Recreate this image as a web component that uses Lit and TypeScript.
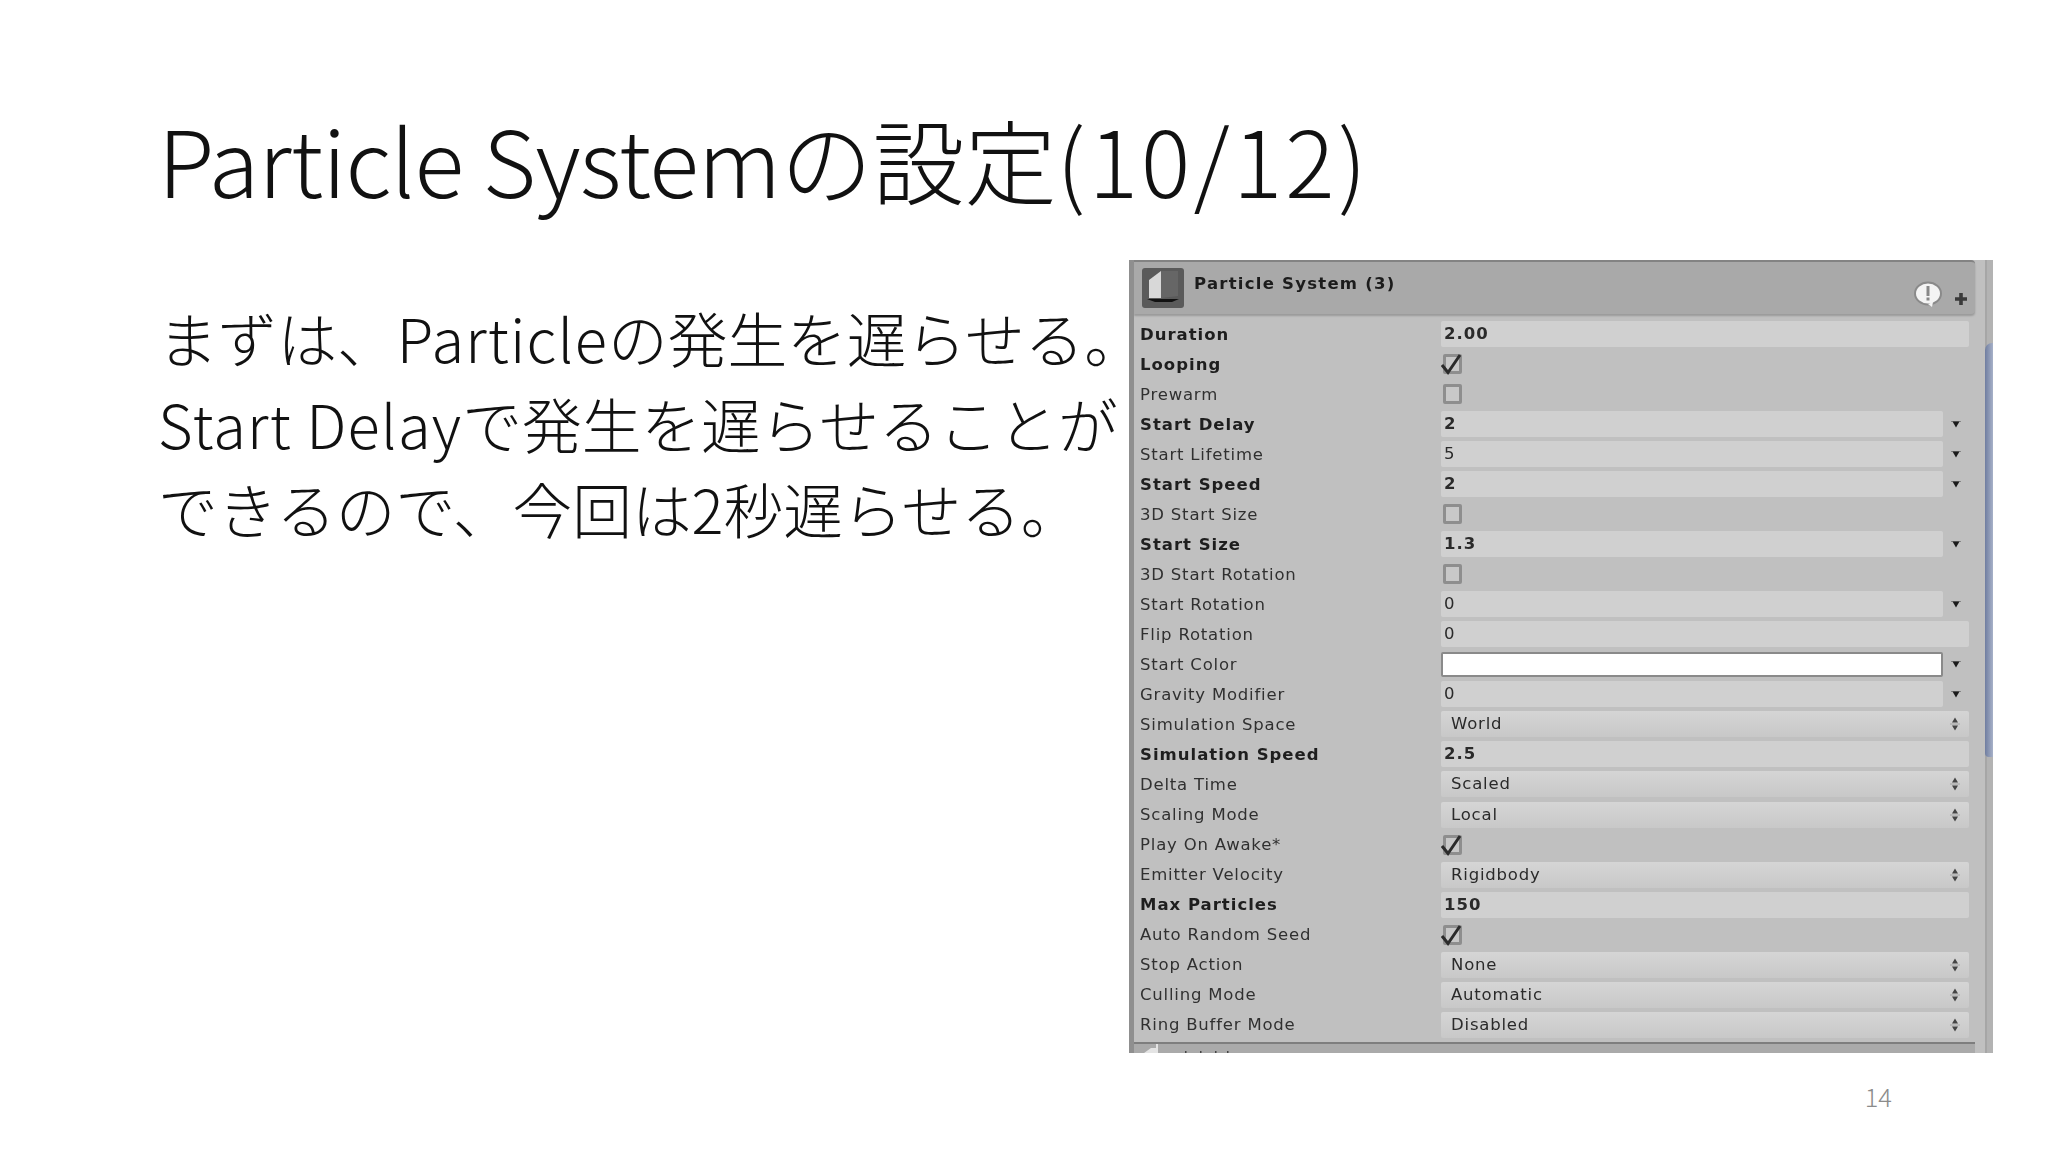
import { LitElement, html, css, svg } from "lit";
import { customElement } from "lit/decorators.js";

type Row = { l: string; b?: boolean; k: "num" | "drop" | "check" | "uncheck" | "wide" | "color" | "select"; v?: string };

const rows: Row[] = [
  { l: "Duration", b: true, k: "wide", v: "2.00" },
  { l: "Looping", b: true, k: "check" },
  { l: "Prewarm", k: "uncheck" },
  { l: "Start Delay", b: true, k: "drop", v: "2" },
  { l: "Start Lifetime", k: "drop", v: "5" },
  { l: "Start Speed", b: true, k: "drop", v: "2" },
  { l: "3D Start Size", k: "uncheck" },
  { l: "Start Size", b: true, k: "drop", v: "1.3" },
  { l: "3D Start Rotation", k: "uncheck" },
  { l: "Start Rotation", k: "drop", v: "0" },
  { l: "Flip Rotation", k: "wide", v: "0" },
  { l: "Start Color", k: "color" },
  { l: "Gravity Modifier", k: "drop", v: "0" },
  { l: "Simulation Space", k: "select", v: "World" },
  { l: "Simulation Speed", b: true, k: "wide", v: "2.5" },
  { l: "Delta Time", k: "select", v: "Scaled" },
  { l: "Scaling Mode", k: "select", v: "Local" },
  { l: "Play On Awake*", k: "check" },
  { l: "Emitter Velocity", k: "select", v: "Rigidbody" },
  { l: "Max Particles", b: true, k: "wide", v: "150" },
  { l: "Auto Random Seed", k: "check" },
  { l: "Stop Action", k: "select", v: "None" },
  { l: "Culling Mode", k: "select", v: "Automatic" },
  { l: "Ring Buffer Mode", k: "select", v: "Disabled" },
];

const arrow = svg`<svg class="arrow" width="10" height="10" viewBox="0 0 10 10"><path d="M0 2.500h10" stroke="#777" stroke-width=".8"/><path d="M1.500 2.500h7L5 8.500z" fill="#1c1c1c"/></svg>`;
const updown = svg`<svg class="arrow" width="10" height="16" viewBox="0 0 10 16"><path d="M5 1.500 8 6.500H2zM5 14.500 2 9.500h6z" fill="#444"/><path d="M0 8h10" stroke="#999" stroke-width=".8"/></svg>`;
const tick = svg`<svg class="tick" width="24" height="26" viewBox="0 0 24 26"><path d="M1 15 7 22.500 19 5" fill="none" stroke="#2b2b2b" stroke-width="3"/></svg>`;

@customElement("app-root")
export class AppRoot extends LitElement {
  static styles = css`
    :host { display: block; width: 2048px; height: 1152px; background: #fff; overflow: hidden;
      font-family: "Noto Sans CJK JP", "Noto Sans", sans-serif; }
    .slide { display: grid; grid-template-columns: 971px 864px; grid-template-rows: 260px 793px 1fr; width: 2048px; height: 1152px; padding-left: 158px; box-sizing: border-box; }
    .title { grid-column: 1 / 3; margin: 0; padding-top: 97px; font-weight: 300; font-size: 92px; line-height: 122px; color: #111; white-space: nowrap; }
    .tl { letter-spacing: -.7px; }
    .tn { letter-spacing: 3.200px; }
    .body { margin: 0; padding-top: 35px; font-weight: 300; font-size: 59.700px; line-height: 85.500px; color: #111; white-space: nowrap; }
    .bl { letter-spacing: 1.200px; }
    .panel { display: flex; flex-direction: column; background: #c0c0c0; border-left: 5px solid #8f8f8f; box-sizing: border-box; position: relative; overflow: hidden; filter: blur(.45px);
      font-family: "DejaVu Sans", sans-serif; font-size: 16.500px; color: #2c2c2c; letter-spacing: .8px; }
    .head { display: flex; align-items: flex-start; height: 54px; flex: none; margin-right: 18px; background: #a9a9a9; border-top: 2px solid #838383; border-radius: 0 4px 4px 0; box-shadow: 0 2px 2px #9a9a9a; position: relative; padding: 6px 0 0 8px; gap: 10px; box-sizing: border-box; }
    .cube { flex: none; }
    .name { font-weight: 700; font-size: 16.500px; line-height: 32px; color: #1c1c1c; letter-spacing: 1.250px; }
    .spacer { flex: 1; }
    .bubble { flex: none; margin-top: 13px; margin-right: 2px; }
    .plus { flex: none; margin-top: 25px; margin-right: 8px; }
    .rows { display: flex; flex-direction: column; padding: 2px 0 0 6px; margin-top: 3px; }
    .row { display: grid; grid-template-columns: 301px 1fr; height: 30.040px; align-items: center; width: 834px; }
    .label { white-space: nowrap; color: #303030; }
    .bold { font-weight: 700; color: #1e1e1e; letter-spacing: 1px; }
    .val { display: flex; align-items: center; }
    .field { height: 26px; line-height: 26px; background: #d0d0d0; padding-left: 3px; box-sizing: border-box; color: #2a2a2a; border-radius: 2px; }
    .wide { width: 528px; }
    .narrow { width: 502px; }
    .select { width: 528px; padding-left: 10px; display: flex; justify-content: space-between; align-items: center; padding-right: 9px; background: linear-gradient(#d5d5d5, #c8c8c8); }
    .color { width: 502px; height: 25px; background: #fff; border: 2px solid #8a8a8a; border-radius: 2px; box-sizing: border-box; }
    .arrow { flex: none; }
    .dropbtn { margin-left: 8px; display: flex; }
    .box { width: 19px; height: 20px; background: #c8c8c8; border: 3px solid #8e8e8e; box-sizing: border-box; border-radius: 2px; position: relative; margin-left: 2px; }
    .tick { position: absolute; left: -5px; top: -7px; }
    .bottom { position: absolute; left: 0; right: 18px; bottom: 0; height: 11px; background: #aaaaaa; border-top: 2px solid #7e7e7e; box-sizing: border-box; overflow: hidden; }
    .foldout { position: absolute; left: 9px; top: 0; }
    .strip { position: absolute; top: 0; right: 0; bottom: 0; width: 8px; background: #b3b3b3; border-left: 2px solid #a6a6a6; box-sizing: border-box; }
    .thumb { position: absolute; left: -2px; right: 0; top: 83px; height: 414px; background: linear-gradient(90deg, #6f7da0, #a7b1c8); border-radius: 7px 0 0 4px; }
    .pageno { grid-column: 1 / 3; justify-self: end; margin: 0; padding: 26px 101px 0 0; font-size: 25.500px; font-weight: 300; line-height: 34px; color: #8b8b8b; }
  `;

  private field(r: Row) {
    switch (r.k) {
      case "wide": return html`<div class="field wide ${r.b ? "bold" : ""}">${r.v}</div>`;
      case "drop": return html`<div class="field narrow ${r.b ? "bold" : ""}">${r.v}</div><span class="dropbtn">${arrow}</span>`;
      case "check": return html`<div class="box">${tick}</div>`;
      case "uncheck": return html`<div class="box"></div>`;
      case "color": return html`<div class="color"></div><span class="dropbtn">${arrow}</span>`;
      case "select": return html`<div class="field select"><span>${r.v}</span>${updown}</div>`;
      default: return html``;
    }
  }

  render() {
    return html`
      <div class="slide">
        <h1 class="title"><span class="tl">Particle System</span>の設定<span class="tn">(10/12)</span></h1>
        <p class="body">まずは、<span class="bl">Particle</span>の発生を遅らせる。<br /><span class="bl">Start Delay</span>で発生を遅らせることが<br />できるので、今回は2秒遅らせる。</p>
        <section class="panel">
          <div class="strip"><div class="thumb"></div></div>
          <div class="head">
            <svg class="cube" width="42" height="40" viewBox="0 0 42 40">
              <rect width="42" height="40" rx="3" fill="#5a5a5a"/>
              <path d="M7 12 19 3v27L7 30z" fill="#d8d8d8"/>
              <path d="M19 3h17v25l-17 2z" fill="#666"/>
              <path d="M5 31h32l-7 3h-17z" fill="#111"/>
            </svg>
            <span class="name">Particle System (3)</span>
            <span class="spacer"></span>
            <svg class="bubble" width="30" height="28" viewBox="0 0 30 28">
              <ellipse cx="15" cy="12.500" rx="13" ry="11" fill="#f4f4f4" stroke="#8a8a8a" stroke-width="2"/>
              <path d="M15 23l4 3 1-5z" fill="#f4f4f4"/>
              <rect x="13.500" y="5" width="3" height="10" fill="#888"/>
              <rect x="13.500" y="16.500" width="3" height="3" fill="#888"/>
            </svg>
            <svg class="plus" width="12" height="12" viewBox="0 0 12 12"><path d="M6 0v12M0 6h12" stroke="#3a3a3a" stroke-width="3.600"/></svg>
          </div>
          <div class="rows">
            ${rows.map(r => html`<div class="row"><div class="label ${r.b ? "bold" : ""}">${r.l}</div><div class="val">${this.field(r)}</div></div>`)}
          </div>
          <div class="bottom">
            <svg class="foldout" width="100" height="9" viewBox="0 0 100 9">
              <path d="M1 9 8 4h5V0h2v9z" fill="#e4e4e4"/>
              <path d="M42 7h1.500v2H42zM57 7h1.500v2H57zM72 7h1.500v2H72zM84 7h1.500v2H84z" fill="#444"/>
            </svg>
          </div>
        </section>
        <p class="pageno">14</p>
      </div>`;
  }
}
